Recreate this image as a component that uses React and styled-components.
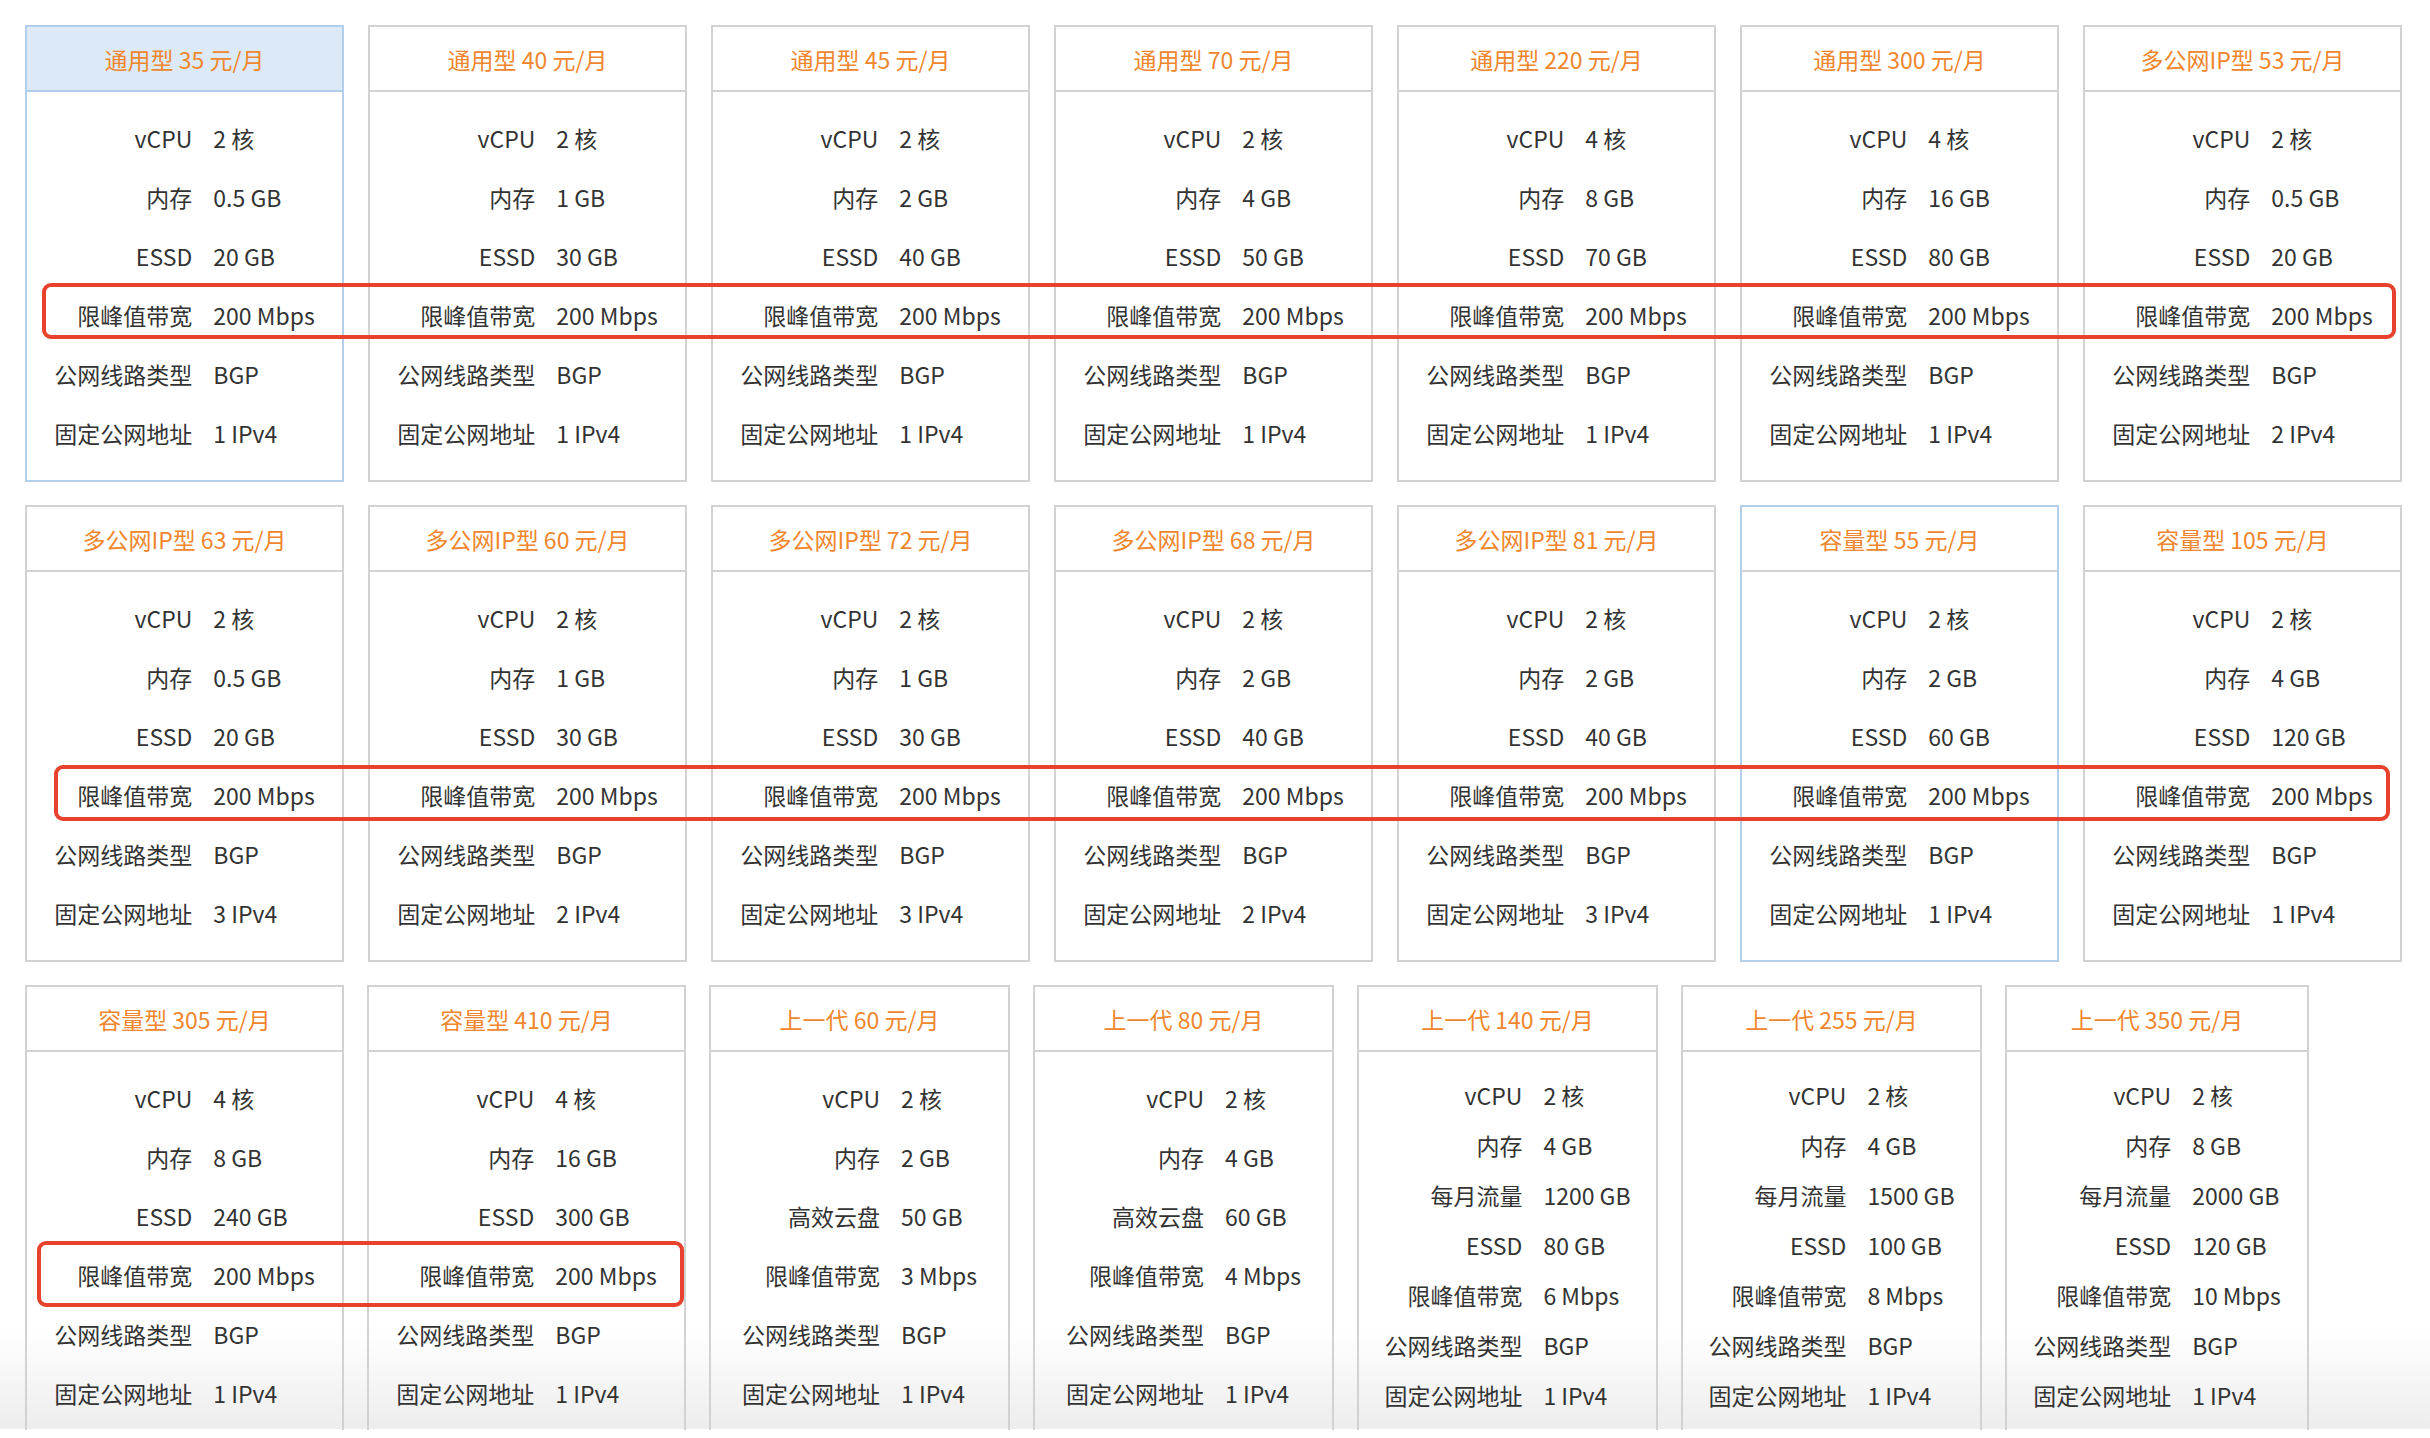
import React from "react";
import styled, { createGlobalStyle } from "styled-components";

const GlobalStyle = createGlobalStyle`
  html, body { margin: 0; padding: 0; background: #ffffff; }
  body {
    font-family: "Noto Sans CJK SC", "Liberation Sans", sans-serif;
    color: #333333;
  }
`;

const Page = styled.div`
  position: relative;
  width: 2430px;
  height: 1438px;
  overflow: hidden;
  padding: 25px 0 0 25px;
  box-sizing: border-box;
  display: flex;
  flex-direction: column;
  gap: 23px;
  background: linear-gradient(
    to bottom,
    #ffffff 0px,
    #ffffff 1330px,
    #ededed 1429px,
    #ffffff 1429px
  );
`;

const Row = styled.div`
  display: flex;
  gap: ${p => p.$gap}px;
  align-items: flex-start;
`;

const Card = styled.div`
  width: ${p => p.$w}px;
  height: ${p => p.$h}px;
  box-sizing: border-box;
  border: 2px solid ${p => (p.$blue ? "#b3cfec" : "#d2d2d2")};
  border-bottom-width: ${p => (p.$open ? 0 : 2)}px;
  display: flex;
  flex-direction: column;
  background: ${p => (p.$open ? "transparent" : "#fff")};
`;

const Header = styled.div`
  height: 63px;
  flex: none;
  display: flex;
  align-items: center;
  justify-content: center;
  background: ${p => (p.$blue ? "#dce9f7" : "#ffffff")};
  border-bottom: 2px solid ${p => (p.$blue ? "#b3cfec" : "#d2d2d2")};
  color: #f0862d;
  font-size: 23px;
`;

const Specs = styled.div`
  display: grid;
  grid-template-columns: auto auto;
  justify-content: center;
  column-gap: 21px;
  grid-auto-rows: ${p => p.$rowH}px;
  align-items: center;
  padding-top: ${p => p.$top}px;
  font-size: 23px;
`;

const Label = styled.div`
  text-align: right;
  white-space: nowrap;
`;

const Value = styled.div`
  white-space: nowrap;
`;

const Frame = styled.div`
  position: absolute;
  border: 4px solid #e8412d;
  border-radius: 9px;
  pointer-events: none;
`;

const std = (cpu, mem, ssd, ip) => [
  ["vCPU", `${cpu} 核`],
  ["内存", `${mem} GB`],
  ["ESSD", `${ssd} GB`],
  ["限峰值带宽", "200 Mbps"],
  ["公网线路类型", "BGP"],
  ["固定公网地址", `${ip} IPv4`],
];

const row1 = [
  { t: "通用型 35 元/月", s: std(2, 0.5, 20, 1), blueHead: true },
  { t: "通用型 40 元/月", s: std(2, 1, 30, 1) },
  { t: "通用型 45 元/月", s: std(2, 2, 40, 1) },
  { t: "通用型 70 元/月", s: std(2, 4, 50, 1) },
  { t: "通用型 220 元/月", s: std(4, 8, 70, 1) },
  { t: "通用型 300 元/月", s: std(4, 16, 80, 1) },
  { t: "多公网IP型 53 元/月", s: std(2, 0.5, 20, 2) },
];

const row2 = [
  { t: "多公网IP型 63 元/月", s: std(2, 0.5, 20, 3) },
  { t: "多公网IP型 60 元/月", s: std(2, 1, 30, 2) },
  { t: "多公网IP型 72 元/月", s: std(2, 1, 30, 3) },
  { t: "多公网IP型 68 元/月", s: std(2, 2, 40, 2) },
  { t: "多公网IP型 81 元/月", s: std(2, 2, 40, 3) },
  { t: "容量型 55 元/月", s: std(2, 2, 60, 1), blueBorder: true },
  { t: "容量型 105 元/月", s: std(2, 4, 120, 1) },
];

const old6 = (mem, disk, bw) => [
  ["vCPU", "2 核"],
  ["内存", `${mem} GB`],
  ["高效云盘", `${disk} GB`],
  ["限峰值带宽", `${bw} Mbps`],
  ["公网线路类型", "BGP"],
  ["固定公网地址", "1 IPv4"],
];

const old7 = (mem, flow, ssd, bw) => [
  ["vCPU", "2 核"],
  ["内存", `${mem} GB`],
  ["每月流量", `${flow} GB`],
  ["ESSD", `${ssd} GB`],
  ["限峰值带宽", `${bw} Mbps`],
  ["公网线路类型", "BGP"],
  ["固定公网地址", "1 IPv4"],
];

const row3 = [
  { t: "容量型 305 元/月", s: std(4, 8, 240, 1), w: 319 },
  { t: "容量型 410 元/月", s: std(4, 16, 300, 1), w: 319 },
  { t: "上一代 60 元/月", s: old6(2, 50, 3), w: 301 },
  { t: "上一代 80 元/月", s: old6(4, 60, 4), w: 301 },
  { t: "上一代 140 元/月", s: old7(4, 1200, 80, 6), w: 301, dense: true },
  { t: "上一代 255 元/月", s: old7(4, 1500, 100, 8), w: 301, dense: true },
  { t: "上一代 350 元/月", s: old7(8, 2000, 120, 10), w: 304, dense: true },
];

const Plan = ({ plan, w = 319, h = 457, open }) => (
  <Card $w={w} $h={h} $blue={plan.blueHead || plan.blueBorder} $open={open}>
    <Header $blue={plan.blueHead}>{plan.t}</Header>
    <Specs $rowH={plan.dense ? 50 : 59} $top={plan.dense ? 18 : 16}>
      {plan.s.map(([k, v]) => (
        <React.Fragment key={k}>
          <Label>{k}</Label>
          <Value>{v}</Value>
        </React.Fragment>
      ))}
    </Specs>
  </Card>
);

export default function App() {
  return (
    <>
      <GlobalStyle />
      <Page>
        <Row $gap={24}>
          {row1.map(p => <Plan key={p.t} plan={p} />)}
        </Row>
        <Row $gap={24}>
          {row2.map(p => <Plan key={p.t} plan={p} />)}
        </Row>
        <Row $gap={23}>
          {row3.map(p => <Plan key={p.t} plan={p} w={p.w} h={445} open />)}
        </Row>
        <Frame style={{ left: 42, top: 283, width: 2346, height: 48 }} />
        <Frame style={{ left: 54, top: 765, width: 2328, height: 48 }} />
        <Frame style={{ left: 37, top: 1241, width: 639, height: 58 }} />
      </Page>
    </>
  );
}
